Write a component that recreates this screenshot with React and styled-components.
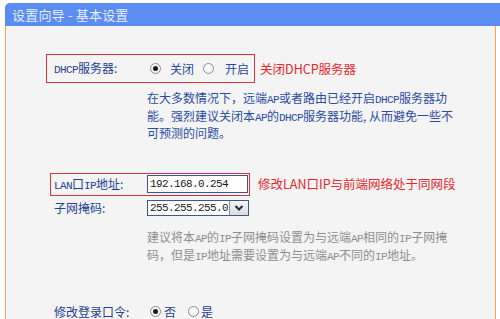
import React from 'react';
import styled, { createGlobalStyle } from 'styled-components';

const Global = createGlobalStyle`
  html, body { margin: 0; padding: 0; background: #fff; }
  body {
    width: 500px; height: 319px; overflow: hidden;
    font-family: "Noto Sans CJK SC", "Noto Sans", sans-serif;
  }
`;

const Page = styled.div`
  box-sizing: border-box;
  height: 319px;
  padding: 3px 0 0 5px;
  display: flex;
  flex-direction: column;
  overflow: hidden;
`;

const Header = styled.div`
  height: 23px;
  flex: none;
  background: #5b8cf0;
  border-top-left-radius: 5px;
  color: #e9eefb;
  font-size: 13px;
  display: flex;
  align-items: center;
  padding-left: 7px;
  letter-spacing: 0.2px;
`;

const Panel = styled.div`
  flex: 1;
  margin-right: 4px;
  background: #f4f4f4;
  border-left: 1px solid #f2a35e;
  border-right: 1px solid #f2a35e;
  display: flex;
  flex-direction: column;
`;

const Row = styled.div`
  display: flex;
  align-items: center;
  height: ${(p) => p.$h}px;
  margin-top: ${(p) => p.$top}px;
  margin-left: ${(p) => p.$left}px;
`;

const RedBox = styled.div`
  box-sizing: border-box;
  height: ${(p) => p.$h}px;
  border: 1px solid #d8353d;
  display: flex;
  align-items: center;
  padding: 0 ${(p) => p.$pr}px 0 ${(p) => p.$pl}px;
`;

const Label = styled.span`
  width: 93px;
  flex: none;
  font-size: 12px;
  line-height: 14px;
  color: #24418f;
  white-space: nowrap;
`;

const Mono = styled.span`
  font-family: "Liberation Mono", monospace;
  font-size: 11px;
  letter-spacing: -0.6px;
  line-height: 1;
`;

const Note = styled.span`
  margin-left: ${(p) => p.$gap}px;
  color: #e8262c;
  font-size: 12.5px;
  line-height: 16px;
  white-space: nowrap;
`;

const RadioGroup = styled.div`
  display: flex;
  align-items: center;
`;

const RadioDot = styled.span`
  box-sizing: border-box;
  width: 11px;
  height: 11px;
  border-radius: 50%;
  border: 1px solid #8d8d8d;
  background: radial-gradient(circle at 40% 35%, #ffffff, #ececec);
  margin-left: ${(p) => p.$ml}px;
  display: flex;
  align-items: center;
  justify-content: center;
  flex: none;
  &::after {
    content: "";
    width: 5px;
    height: 5px;
    border-radius: 50%;
    background: ${(p) => (p.$on ? '#1b1b1b' : 'transparent')};
  }
`;

const RadioText = styled.span`
  margin-left: ${(p) => p.$gap}px;
  font-size: 12px;
  line-height: 14px;
  color: ${(p) => p.$color || '#24418f'};
  white-space: nowrap;
`;

const Desc = styled.div`
  margin-top: ${(p) => p.$top}px;
  margin-left: 141px;
  font-size: 12px;
  line-height: ${(p) => p.$lh}px;
  color: ${(p) => p.$color};
  white-space: nowrap;
`;

const Line = styled.div`
  height: ${(p) => p.$h}px;
  overflow: visible;
`;

const Field = styled.div`
  box-sizing: border-box;
  width: ${(p) => p.$w}px;
  height: ${(p) => p.$h}px;
  border: 1px solid #3e5592;
  background: #fff;
  display: flex;
  align-items: center;
  font-family: "Liberation Mono", monospace;
  font-size: 11px;
  letter-spacing: -0.6px;
  color: #1a1a1a;
`;

const FieldText = styled.span`
  flex: 1;
  padding-left: 2px;
`;

const DropButton = styled.span`
  box-sizing: border-box;
  width: 19px;
  height: 100%;
  border-left: 1px solid #7f8fb5;
  background: linear-gradient(#f4f4f4, #dcdcdc);
  display: flex;
  align-items: center;
  justify-content: center;
`;

export default function App() {
  return (
    <>
      <Global />
      <Page>
        <Header>设置向导 - 基本设置</Header>
        <Panel>
          <Row $top={28} $left={40} $h={29}>
            <RedBox $h={29} $pl={7} $pr={5}>
              <Label>
                <Mono>DHCP</Mono>服务器:
              </Label>
              <RadioGroup>
                <RadioDot $ml={3} $on />
                <RadioText $gap={9} $color="#2a4aa0">关闭</RadioText>
                <RadioDot $ml={9} />
                <RadioText $gap={11} $color="#2a4aa0">开启</RadioText>
              </RadioGroup>
            </RedBox>
            <Note $gap={5}>关闭DHCP服务器</Note>
          </Row>
          <Desc $top={6} $lh={17.5} $color="#2b4ba2">
            <Line $h={17.5}>
              在大多数情况下，远端<Mono>AP</Mono>或者路由已经开启<Mono>DHCP</Mono>服务器功
            </Line>
            <Line $h={17.5}>
              能。强烈建议关闭本<Mono>AP</Mono>的<Mono>DHCP</Mono>服务器功能, 从而避免一些不
            </Line>
            <Line $h={17.5}>可预测的问题。</Line>
          </Desc>
          <Row $top={31} $left={44} $h={23}>
            <RedBox $h={23} $pl={3} $pr={1}>
              <Label>
                <Mono>LAN</Mono>口<Mono>IP</Mono>地址:
              </Label>
              <Field $w={101} $h={18}>
                <FieldText>192.168.0.254</FieldText>
              </Field>
            </RedBox>
            <Note $gap={8}>修改LAN口IP与前端网络处于同网段</Note>
          </Row>
          <Row $top={4} $left={48} $h={16}>
            <Label>子网掩码:</Label>
            <Field $w={102} $h={16}>
              <FieldText>255.255.255.0</FieldText>
              <DropButton>
                <svg width="10" height="8" viewBox="0 0 10 8">
                  <path d="M1.5 2 L5 5.5 L8.5 2" fill="none" stroke="#1e2a4a" strokeWidth="2" />
                </svg>
              </DropButton>
            </Field>
          </Row>
          <Desc $top={12} $lh={18} $color="#8e8e8e">
            <Line $h={18}>
              建议将本<Mono>AP</Mono>的<Mono>IP</Mono>子网掩码设置为与远端<Mono>AP</Mono>相同的<Mono>IP</Mono>子网掩
            </Line>
            <Line $h={18}>
              码，但是<Mono>IP</Mono>地址需要设置为与远端<Mono>AP</Mono>不同的<Mono>IP</Mono>地址。
            </Line>
          </Desc>
          <Row $top={41} $left={48} $h={14}>
            <Label>修改登录口令:</Label>
            <RadioGroup>
              <RadioDot $ml={3} $on />
              <RadioText $gap={3}>否</RadioText>
              <RadioDot $ml={12} />
              <RadioText $gap={2}>是</RadioText>
            </RadioGroup>
          </Row>
        </Panel>
      </Page>
    </>
  );
}
